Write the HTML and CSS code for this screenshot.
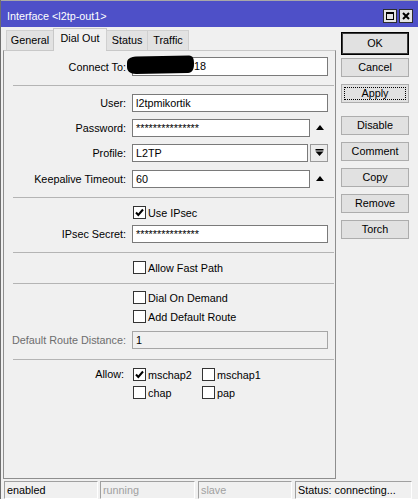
FILE: index.html
```html
<!DOCTYPE html>
<html>
<head>
<meta charset="utf-8">
<link rel="stylesheet" href="styles.css">
</head>
<body>
<div class="window">
  <div class="titlebar">
    <span class="title">Interface &lt;l2tp-out1&gt;</span>
    <div class="tb-btns">
      <div class="tb-btn"><svg width="12" height="12" viewBox="0 0 12 12"><rect x="2.5" y="2.5" width="7" height="7" fill="none" stroke="#000" stroke-width="1"/><rect x="2" y="2" width="8" height="2" fill="#000"/></svg></div>
      <div class="tb-btn"><svg width="12" height="12" viewBox="0 0 12 12"><path d="M3 3 L9 9 M9 3 L3 9" stroke="#000" stroke-width="2"/></svg></div>
    </div>
  </div>
  <div class="main">
    <div class="leftcol">
      <div class="tabs">
        <div class="tab w47">General</div>
        <div class="tab sel w53">Dial Out</div>
        <div class="tab w41">Status</div>
        <div class="tab w41">Traffic</div>
      </div>
      <div class="panel">
        <div class="row h19 connect">
          <span class="lbl">Connect To:</span>
          <div class="input full"><span class="hidden-pad"></span>18</div>
          <svg class="blob" width="70" height="20" viewBox="0 0 70 20"><path d="M1,8 C1,4 4,2 10,1.5 L63,0.5 C67,0.5 68,4 68,9 C68,15 66,17.5 62,18 L10,19 C4,19 1,16 1,12 Z" fill="#000"/></svg>
        </div>
        <div class="sep m9"></div>
        <div class="row m8">
          <span class="lbl">User:</span>
          <div class="input full">l2tpmikortik</div>
        </div>
        <div class="row m7">
          <span class="lbl">Password:</span>
          <div class="input short">***************</div>
          <span class="arrow"><span class="tri"></span></span>
        </div>
        <div class="row m7">
          <span class="lbl">Profile:</span>
          <div class="input prof">L2TP</div>
          <div class="ddbtn"><svg width="9" height="8" viewBox="0 0 9 8"><rect x="0.5" y="0" width="8" height="1.5" fill="#000"/><polygon points="0.5,2.5 8.5,2.5 4.5,7" fill="#000"/></svg></div>
        </div>
        <div class="row m8">
          <span class="lbl">Keepalive Timeout:</span>
          <div class="input short">60</div>
          <span class="arrow"><span class="tri"></span></span>
        </div>
        <div class="sep m9"></div>
        <div class="cbrow m8">
          <span class="cb"><svg width="11" height="11" viewBox="0 0 11 11"><path d="M2,5.5 L4.3,8 L9,2.5" fill="none" stroke="#000" stroke-width="2"/></svg></span>
          <span>Use IPsec</span>
        </div>
        <div class="row m6">
          <span class="lbl">IPsec Secret:</span>
          <div class="input full">***************</div>
        </div>
        <div class="sep m9"></div>
        <div class="cbrow m8">
          <span class="cb"></span>
          <span>Allow Fast Path</span>
        </div>
        <div class="sep m9"></div>
        <div class="cbrow m7">
          <span class="cb"></span>
          <span>Dial On Demand</span>
        </div>
        <div class="cbrow m6">
          <span class="cb"></span>
          <span>Add Default Route</span>
        </div>
        <div class="row m8">
          <span class="lbl dis">Default Route Distance:</span>
          <div class="input full disabled">1</div>
        </div>
        <div class="sep m10"></div>
        <div class="allow m8">
          <span class="lbl allow-lbl">Allow:</span>
          <div class="allow-grid">
            <div class="opt"><span class="cb"><svg width="11" height="11" viewBox="0 0 11 11"><path d="M2,5.5 L4.3,8 L9,2.5" fill="none" stroke="#000" stroke-width="2"/></svg></span><span>mschap2</span></div>
            <div class="opt"><span class="cb"></span><span>mschap1</span></div>
            <div class="opt"><span class="cb"></span><span>chap</span></div>
            <div class="opt"><span class="cb"></span><span>pap</span></div>
          </div>
        </div>
      </div>
    </div>
    <div class="btncol">
      <div class="btn ok">OK</div>
      <div class="btn g3">Cancel</div>
      <div class="btn g7 apply">Apply</div>
      <div class="btn g13">Disable</div>
      <div class="btn g7">Comment</div>
      <div class="btn g7">Copy</div>
      <div class="btn g7">Remove</div>
      <div class="btn g7">Torch</div>
    </div>
  </div>
  <div class="statusbar">
    <div class="sb w94">enabled</div>
    <div class="sb w95 gray">running</div>
    <div class="sb w94 gray">slave</div>
    <div class="sb w117">Status: connecting...</div>
  </div>
</div>
</body>
</html>
```
FILE: styles.css
```css
* { box-sizing: border-box; }
html, body { margin: 0; padding: 0; }
body {
  font-family: "Liberation Sans", Arial, sans-serif;
  font-size: 10.8px;
  color: #000;
  background: #f0f0f0;
}
.window {
  width: 418px;
  height: 499px;
  display: flex;
  flex-direction: column;
  border-left: 1px solid #6f6f6f;
  background: #f0f0f0;
  overflow: hidden;
}
.titlebar {
  height: 27px;
  flex: none;
  border-top: 1px solid #a8a8a8;
  background: #4e50c8;
  color: #fff;
  display: flex;
  align-items: flex-start;
  padding-left: 6px;
}
.title {
  margin-top: 9px;
  line-height: 13px;
  font-size: 10.8px;
}
.tb-btns {
  margin-left: auto;
  margin-top: 8px;
  margin-right: 5px;
  display: flex;
  gap: 2px;
}
.tb-btn {
  width: 14px;
  height: 14px;
  border: 1px solid #2e2e2e;
  background: #e4e4e4;
  display: flex;
  align-items: center;
  justify-content: center;
}
.tb-btn svg { display: block; }

.main {
  flex: 1;
  display: flex;
  padding: 1px 0 1px 2px;
  min-height: 0;
}
.leftcol {
  width: 333px;
  display: flex;
  flex-direction: column;
}
.tabs {
  height: 22px;
  display: flex;
  align-items: flex-end;
  padding-left: 3px;
  position: relative;
  z-index: 2;
}
.tab {
  height: 20px;
  border: 1px solid #d0d0d0;
  border-bottom: none;
  background: #e2e2e2;
  text-align: center;
  line-height: 19px;
  margin-right: -1px;
}
.tab.sel {
  height: 23px;
  margin-bottom: -1px;
  background: #f0f0f0;
  border-color: #c8c8c8;
  line-height: 19px;
  padding-bottom: 2px;
}
.w47 { width: 48px; }
.w53 { width: 54px; }
.w41 { width: 42px; }

.panel {
  flex: 1;
  border: 1px solid #8e8e8e;
  border-top-color: #c8c8c8;
  background: #f0f0f0;
  padding-top: 6px;
  display: flex;
  flex-direction: column;
}
.row {
  display: flex;
  align-items: center;
  height: 18px;
  flex: none;
}
.row.h19 { height: 19px; }
.connect { position: relative; }
.connect .input { height: 19px; line-height: 17px; }
.hidden-pad { display: inline-block; width: 58px; }
.blob {
  position: absolute;
  left: 122px;
  top: -2px;
}
.lbl {
  width: 122px;
  text-align: right;
  flex: none;
  white-space: nowrap;
}
.lbl.dis { color: #6d6d6d; }
.input {
  margin-left: 6px;
  height: 18px;
  border: 1px solid #7a7a7a;
  background: #fff;
  padding-left: 3px;
  line-height: 16px;
  white-space: nowrap;
  overflow: hidden;
  flex: none;
}
.input.full { width: 196px; }
.input.short { width: 178px; }
.input.prof { width: 176px; }
.input.disabled {
  background: #f0f0f0;
  border-color: #a6a6a6;
}
.arrow {
  width: 20px;
  height: 18px;
  display: flex;
  align-items: center;
  justify-content: center;
}
.tri {
  width: 0;
  height: 0;
  border-left: 4.5px solid transparent;
  border-right: 4.5px solid transparent;
  border-bottom: 5px solid #000;
  margin-top: -2px;
}
.ddbtn {
  margin-left: 2px;
  width: 18px;
  height: 18px;
  border: 1px solid #9a9a9a;
  background: #ececec;
  display: flex;
  align-items: flex-start;
  justify-content: center;
  padding-top: 4px;
}
.ddbtn svg { display: block; }

.sep {
  height: 1px;
  background: #b4b4b4;
  margin-left: 9px;
  margin-right: 1px;
  flex: none;
}
.m6 { margin-top: 6px; }
.m7 { margin-top: 7px; }
.m8 { margin-top: 8px; }
.m9 { margin-top: 9px; }
.m10 { margin-top: 10px; }

.cbrow {
  display: flex;
  align-items: center;
  height: 13px;
  padding-left: 129px;
  gap: 2px;
  flex: none;
}
.cb {
  width: 13px;
  height: 13px;
  border: 1px solid #333;
  background: #fff;
  display: inline-flex;
  align-items: center;
  justify-content: center;
  flex: none;
}
.cb svg { display: block; }

.allow {
  display: flex;
  align-items: flex-start;
  flex: none;
}
.allow-lbl {
  width: 120px;
  line-height: 13px;
}
.allow-grid {
  margin-left: 9px;
  display: grid;
  grid-template-columns: 69px 69px;
  row-gap: 5px;
}
.opt {
  display: flex;
  align-items: center;
  gap: 2px;
  height: 13px;
}

.btncol {
  margin-left: 5px;
  width: 68px;
  padding-top: 4px;
  display: flex;
  flex-direction: column;
}
.btn {
  width: 68px;
  height: 19px;
  border: 1px solid #adadad;
  background: #e1e1e1;
  text-align: center;
  line-height: 17px;
  position: relative;
  flex: none;
}
.btn.ok {
  height: 23px;
  line-height: 21px;
  border: 1px solid #000;
  box-shadow: inset 0 0 0 1px #3c3c3c;
}
.g3 { margin-top: 3px; }
.g7 { margin-top: 7px; }
.g13 { margin-top: 13px; }
.apply::after {
  content: "";
  position: absolute;
  left: 2px;
  top: 2px;
  right: 2px;
  bottom: 2px;
  border: 1px dotted #000;
}

.statusbar {
  flex: none;
  height: 18px;
  margin-top: 1px;
  padding-left: 3px;
  display: flex;
}
.sb {
  height: 18px;
  border: 1px solid;
  border-color: #a0a0a0 #ffffff #ffffff #a0a0a0;
  padding-left: 2px;
  line-height: 16px;
  white-space: nowrap;
  overflow: hidden;
  margin-right: 3px;
}
.sb.w94 { width: 94px; }
.sb.w95 { width: 95px; }
.sb.w117 { width: 117px; }
.sb:first-child { margin-right: 2px; }
.sb.gray { color: #a0a0a0; }
```
